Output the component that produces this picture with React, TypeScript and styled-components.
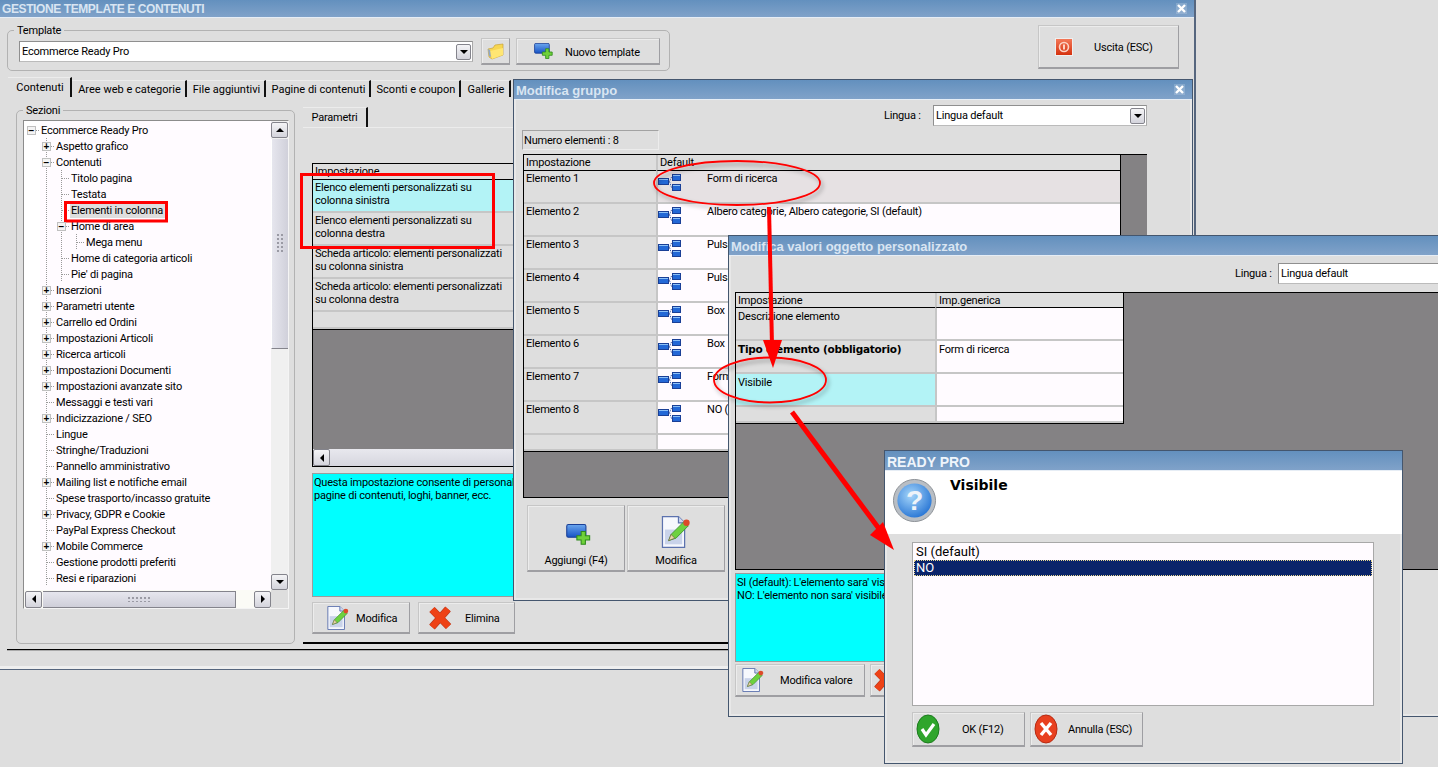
import React from "react";
import styled, { createGlobalStyle } from "styled-components";

const treeItems: { label: string; level: number; exp?: "+" | "-"; hl?: boolean }[] = [
  { label: "Ecommerce Ready Pro", level: 0, exp: "-" },
  { label: "Aspetto grafico", level: 1, exp: "+" },
  { label: "Contenuti", level: 1, exp: "-" },
  { label: "Titolo pagina", level: 2 },
  { label: "Testata", level: 2 },
  { label: "Elementi in colonna", level: 2, hl: true },
  { label: "Home di area", level: 2, exp: "-" },
  { label: "Mega menu", level: 3 },
  { label: "Home di categoria articoli", level: 2 },
  { label: "Pie' di pagina", level: 2 },
  { label: "Inserzioni", level: 1, exp: "+" },
  { label: "Parametri utente", level: 1, exp: "+" },
  { label: "Carrello ed Ordini", level: 1, exp: "+" },
  { label: "Impostazioni Articoli", level: 1, exp: "+" },
  { label: "Ricerca articoli", level: 1, exp: "+" },
  { label: "Impostazioni Documenti", level: 1, exp: "+" },
  { label: "Impostazioni avanzate sito", level: 1, exp: "+" },
  { label: "Messaggi e testi vari", level: 1 },
  { label: "Indicizzazione / SEO", level: 1, exp: "+" },
  { label: "Lingue", level: 1 },
  { label: "Stringhe/Traduzioni", level: 1 },
  { label: "Pannello amministrativo", level: 1 },
  { label: "Mailing list e notifiche email", level: 1, exp: "+" },
  { label: "Spese trasporto/incasso gratuite", level: 1 },
  { label: "Privacy, GDPR e Cookie", level: 1, exp: "+" },
  { label: "PayPal Express Checkout", level: 1 },
  { label: "Mobile Commerce", level: 1, exp: "+" },
  { label: "Gestione prodotti preferiti", level: 1 },
  { label: "Resi e riparazioni", level: 1 },
];

const tabs = [
  { label: "Contenuti", w: 64 },
  { label: "Aree web e categorie", w: 115 },
  { label: "File aggiuntivi", w: 79 },
  { label: "Pagine di contenuti", w: 105 },
  { label: "Sconti e coupon", w: 90 },
  { label: "Gallerie", w: 50 },
];

const params = [
  "Elenco elementi personalizzati su colonna sinistra",
  "Elenco elementi personalizzati su colonna destra",
  "Scheda articolo: elementi personalizzati su colonna sinistra",
  "Scheda articolo: elementi personalizzati su colonna destra",
];

const groupRows = [
  "Form di ricerca",
  "Albero categorie, Albero categorie, SI (default)",
  "Pulsanti",
  "Pulsanti",
  "Box",
  "Box",
  "Form",
  "NO (default)",
];

const CloseIcon = () => (
  <svg width="9" height="9" viewBox="0 0 9 9">
    <path d="M1 1l7 7M8 1L1 8" stroke="#fff" strokeWidth="2.4" />
  </svg>
);

const FolderIcon = () => (
  <svg width="17" height="17" viewBox="0 0 17 17">
    <path d="M1 6l5-1 2-3 8-1v11l-11 4-3-2z" fill="#f7d651" stroke="#c9a437" strokeWidth=".7" />
    <path d="M3 8l13-3v7l-11 4z" fill="#ffe673" />
    <path d="M1 6l1 7 2 1-1-7z" fill="#8fa7c9" />
  </svg>
);

const AddIcon = ({ size = 22 }: { size?: number }) => (
  <svg width={size} height={size * 0.82} viewBox="0 0 24 20">
    <defs>
      <linearGradient id="addBlue" x1="0" y1="0" x2="0" y2="1">
        <stop offset="0" stopColor="#6aa6ee" />
        <stop offset="1" stopColor="#1652c4" />
      </linearGradient>
    </defs>
    <rect x=".5" y=".5" width="18" height="12" rx="1.5" fill="url(#addBlue)" stroke="#1a3f96" />
    <path d="M14 7h4v4h4v4h-4v4h-4v-4h-4v-4h4z" fill="#6fd13a" stroke="#2f8a1c" />
  </svg>
);

const EditIcon = ({ size = 24 }: { size?: number }) => (
  <svg width={size} height={size} viewBox="0 0 26 26">
    <path d="M2 .5h13l5 5v20H2z" fill="#f6f8fd" stroke="#5c72ae" />
    <path d="M15 .5v5h5" fill="#cfd9ee" stroke="#5c72ae" />
    <rect x="4" y="11" width="14" height="12" fill="#c9d3ea" />
    <path d="M7 20l2-5 10-10 4 3-10 10z" fill="#6dd13f" stroke="#3a8f2a" strokeWidth=".7" />
    <path d="M7 20l2-5 3 3z" fill="#e8d6a8" stroke="#6b5a3a" strokeWidth=".5" />
    <circle cx="21.5" cy="5.5" r="2.6" fill="#dc4a2a" />
  </svg>
);

const CrossIcon = () => (
  <svg width="24" height="24" viewBox="0 0 24 24">
    <path d="M4 3.500L20.500 20.500M20 3L4 21" stroke="#b93a1e" strokeWidth="7.500" />
    <path d="M4 3.500L20.500 20.500M20 3L4 21" stroke="#ee4216" strokeWidth="6.300" />
  </svg>
);

const TreeIcon = () => (
  <svg width="23" height="17" viewBox="0 0 23 17">
    <path d="M10 7.500h1.500l2-4.500h1M11.500 7.500l2 6h1" fill="none" stroke="#3c5fa8" strokeDasharray="1.500 1" />
    <rect x=".5" y="4.500" width="10" height="6" fill="#2368d6" stroke="#1a3f96" />
    <rect x="14.500" y=".5" width="8" height="6" fill="#2368d6" stroke="#1a3f96" />
    <rect x="14.500" y="10.500" width="8" height="6" fill="#2368d6" stroke="#1a3f96" />
    <path d="M1 5.500h9M15 1.500h7M15 11.500h7" stroke="#8cc0f7" />
  </svg>
);

const PowerIcon = () => (
  <svg width="18" height="18" viewBox="0 0 18 18">
    <defs>
      <linearGradient id="pwr" x1="0" y1="0" x2="0" y2="1">
        <stop offset="0" stopColor="#f47a5a" />
        <stop offset="1" stopColor="#d42f0c" />
      </linearGradient>
    </defs>
    <rect x=".5" y=".5" width="17" height="17" fill="url(#pwr)" stroke="#efefef" />
    <circle cx="9" cy="9" r="4.500" fill="none" stroke="#fbd3c5" strokeWidth="1.600" />
    <rect x="8" y="6.500" width="2" height="5" fill="#fbd3c5" />
  </svg>
);

const QuestionIcon = () => (
  <svg width="45" height="45" viewBox="0 0 46 46">
    <defs>
      <radialGradient id="qBlue" cx=".4" cy=".35" r=".7">
        <stop offset="0" stopColor="#a6d6fa" />
        <stop offset="1" stopColor="#2674d4" />
      </radialGradient>
    </defs>
    <circle cx="23" cy="23" r="21.500" fill="#b9bec4" stroke="#8b9096" />
    <circle cx="23" cy="23" r="17.500" fill="url(#qBlue)" />
    <text x="23" y="33" textAnchor="middle" fontFamily="Liberation Sans" fontWeight="700" fontSize="29" fill="#eef3f9">?</text>
  </svg>
);

const RoundIcon = ({ ok }: { ok?: boolean }) => (
  <svg width="24" height="30" viewBox="0 0 24 30">
    <ellipse cx="12" cy="15" rx="11" ry="14" fill={ok ? "#2fa52c" : "#e8401f"} stroke={ok ? "#1d7a1e" : "#b52a12"} />
    {ok ? (
      <path d="M6 15l4 6 8-11" fill="none" stroke="#fff" strokeWidth="3.200" />
    ) : (
      <path d="M7 9l10 12M17 9L7 21" fill="none" stroke="#fff" strokeWidth="3.400" />
    )}
  </svg>
);

const Combo = ({ value, width }: { value: string; width: number }) => (
  <ComboBox $width={width}>
    <span>{value}</span>
    <ScrollBtn $dir="down" $w={15} $h={16} />
  </ComboBox>
);

const Table = ({
  cols,
  width,
  head,
  headH,
  children,
}: {
  cols: string;
  width: number;
  head: string[];
  headH: number;
  children: React.ReactNode;
}) => (
  <GridTable $cols={cols} $width={width}>
    {head.map((h, i) => (
      <HeadCell key={h} $h={headH} $second={i > 0}>{h}</HeadCell>
    ))}
    {children}
  </GridTable>
);

const App = () => {
  return (
    <Desktop>
      <GlobalStyle />

      {/* finestra principale */}
      <Window $x={0} $y={0} $w={1196} $h={671}>
        <TitleBar $h={18}>
          <TitleText $caps>GESTIONE TEMPLATE E CONTENUTI</TitleText>
          <CloseBtn $right={7}><CloseIcon /></CloseBtn>
        </TitleBar>
        <TopRow>
          <TemplateGroup>
            <Legend>Template</Legend>
            <TemplateInner>
              <Combo value="Ecommerce Ready Pro" width={454} />
              <FlatBtn $w={29} $h={27} $ml={8}><FolderIcon /></FlatBtn>
              <FlatBtn $w={144} $h={27} $ml={6} $pl={17}>
                <AddIcon size={20} />
                <BtnLabel $ml={11} $low>Nuovo template</BtnLabel>
              </FlatBtn>
            </TemplateInner>
          </TemplateGroup>
          <FlatBtn $w={141} $h={44} $mt={7} $ml={368} $pl={16}>
            <PowerIcon />
            <BtnLabel $ml={21} $low>Uscita (ESC)</BtnLabel>
          </FlatBtn>
        </TopRow>
        <Tabs>
          {tabs.map((t, i) => (
            <Tab key={t.label} $w={t.w} $active={i === 0}>{t.label}</Tab>
          ))}
        </Tabs>
        <MainPanel>
          <SectionGroup>
            <Legend>Sezioni</Legend>
            <TreeFrame>
              <TreeBody>
                {treeItems.map((it) => (
                  <TreeRow key={it.label}>
                    {it.level === 0 ? (
                      <TreeCell $branch><Expander>−</Expander></TreeCell>
                    ) : (
                      <TreeCell />
                    )}
                    {it.level >= 2 && <TreeCell $line />}
                    {it.level >= 3 && <TreeCell $line />}
                    {it.level > 0 && (
                      <TreeCell $line $branch>
                        {it.exp && <Expander>{it.exp === "+" ? "+" : "−"}</Expander>}
                      </TreeCell>
                    )}
                    <TreeLabel $hl={it.hl}>{it.label}</TreeLabel>
                  </TreeRow>
                ))}
              </TreeBody>
              <VScroll>
                <ScrollBtn $dir="up" $w={17} $h={16} />
                <VThumb $h={210}><Grip /></VThumb>
                <ScrollBtn $dir="down" $w={17} $h={16} />
              </VScroll>
              <HScroll>
                <ScrollBtn $dir="left" $w={17} $h={17} />
                <HThumb $w={193}><Grip $wide /></HThumb>
                <ScrollBtn $dir="right" $w={17} $h={17} />
              </HScroll>
              <Corner />
            </TreeFrame>
          </SectionGroup>

          <SubPanel>
            <SubTab>Parametri</SubTab>
            <SubBody>
              <GridArea $h={304} $w={400} $mt={35}>
                <Table cols="1fr" width={201} head={["Impostazione"]} headH={16}>
                  {params.map((p, i) => (
                    <Cell key={p} $h={33} $bg={i === 0 ? "#b3f3f6" : "#dedede"}>{p}</Cell>
                  ))}
                  <Cell $h={17} $bg="#dedede" />
                </Table>
                <GreyFill />
                <HScrollPlain>
                  <ScrollBtn $dir="left" $w={17} $h={17} />
                </HScrollPlain>
              </GridArea>
              <HelpBox $h={124} $w={400} $mt={6}>
                Questa impostazione consente di personalizzare gli elementi delle
                <br />
                pagine di contenuti, loghi, banner, ecc.
              </HelpBox>
              <BtnRow $mt={5} $gap={8}>
                <FlatBtn $w={98} $h={32}>
                  <EditIcon />
                  <BtnLabel $ml={6} $low>Modifica</BtnLabel>
                </FlatBtn>
                <FlatBtn $w={97} $h={32} $pl={9}>
                  <CrossIcon />
                  <BtnLabel $ml={13} $low>Elimina</BtnLabel>
                </FlatBtn>
              </BtnRow>
            </SubBody>
          </SubPanel>
        </MainPanel>
        <WindowFoot />
      </Window>

      {/* modifica gruppo */}
      <Window $x={513} $y={79} $w={680} $h={522} $frame>
        <TitleBar $h={20}>
          <TitleText>Modifica gruppo</TitleText>
          <CloseBtn $right={7}><CloseIcon /></CloseBtn>
        </TitleBar>
        <LangRow $ml={370} $mt={5}>
          <LangLabel $w={49}>Lingua :</LangLabel>
          <Combo value="Lingua default" width={214} />
        </LangRow>
        <CountBox>Numero elementi : 8</CountBox>
        <GridArea $h={344} $w={624} $mt={4} $ml={9}>
          <Table cols="132px 1fr" width={597} head={["Impostazione", "Default"]} headH={16}>
            {groupRows.map((r, i) => (
              <React.Fragment key={i}>
                <Cell $h={33}>Elemento {i + 1}</Cell>
                <ValueCell $h={33} $current={i === 0} $icon>
                  <TreeIcon />
                  <ValueText>{r}</ValueText>
                </ValueCell>
              </React.Fragment>
            ))}
            <Cell $h={16} />
            <ValueCell $h={16} />
          </Table>
          <GreyFill />
        </GridArea>
        <BtnRow $mt={7} $ml={13} $gap={2}>
          <TallBtn>
            <AddShift><AddIcon size={26} /></AddShift>
            <span>Aggiungi (F4)</span>
          </TallBtn>
          <TallBtn>
            <EditIcon size={32} />
            <span>Modifica</span>
          </TallBtn>
        </BtnRow>
      </Window>

      {/* modifica valori */}
      <Window $x={728} $y={235} $w={730} $h={482} $frame>
        <TitleBar $h={20}>
          <TitleText>Modifica valori oggetto personalizzato</TitleText>
        </TitleBar>
        <LangRow $ml={506} $mt={7}>
          <LangLabel $w={43}>Lingua :</LangLabel>
          <Combo value="Lingua default" width={300} />
        </LangRow>
        <GridArea $h={278} $w={720} $mt={8} $ml={6}>
          <Table cols="199px 1fr" width={388} head={["Impostazione", "Imp.generica"]} headH={15}>
            <Cell $h={33} $pt={2}>Descrizione elemento</Cell>
            <ValueCell $h={33} />
            <Cell $h={33} $pt={2}><BoldText>Tipo elemento (obbligatorio)</BoldText></Cell>
            <ValueCell $h={33} $pt={2}>Form di ricerca</ValueCell>
            <Cell $h={33} $bg="#b3f3f6" $pt={2}>Visibile</Cell>
            <ValueCell $h={33} />
            <Cell $h={16} />
            <ValueCell $h={16} />
          </Table>
          <GreyFill />
        </GridArea>
        <HelpBox $h={89} $w={400} $mt={3} $ml={6}>
          SI (default): L'elemento sara' visibile
          <br />
          NO: L'elemento non sara' visibile
        </HelpBox>
        <BtnRow $mt={2} $ml={6} $gap={5}>
          <FlatBtn $w={130} $h={33} $pl={5}>
            <EditIcon />
            <BtnLabel $ml={15}>Modifica valore</BtnLabel>
          </FlatBtn>
          <FlatBtn $w={130} $h={33} $pl={2}>
            <CrossIcon />
          </FlatBtn>
        </BtnRow>
      </Window>

      {/* dialogo */}
      <Window $x={884} $y={450} $w={519} $h={314} $frame>
        <TitleBar $h={20}>
          <TitleText $small>READY PRO</TitleText>
        </TitleBar>
        <DialogHead>
          <QuestionIcon />
          <DialogTitle>Visibile</DialogTitle>
        </DialogHead>
        <ChoiceList>
          <Choice>SI (default)</Choice>
          <Choice $selected>NO</Choice>
        </ChoiceList>
        <BtnRow $mt={6} $ml={27} $gap={5}>
          <FlatBtn $w={113} $h={35} $pl={3}>
            <RoundIcon ok />
            <BtnLabel $ml={22}>OK (F12)</BtnLabel>
          </FlatBtn>
          <FlatBtn $w={113} $h={35} $pl={3}>
            <RoundIcon />
            <BtnLabel $ml={10}>Annulla (ESC)</BtnLabel>
          </FlatBtn>
        </BtnRow>
      </Window>

      {/* annotazioni rosse */}
      <Marks width="1438" height="767" viewBox="0 0 1438 767">
        <defs>
          <filter id="soft" x="-10%" y="-20%" width="120%" height="150%">
            <feDropShadow dx="2" dy="3" stdDeviation="2" floodColor="#000" floodOpacity=".35" />
          </filter>
        </defs>
        <rect x="65.500" y="202.500" width="101" height="18.500" fill="none" stroke="#f00" strokeWidth="3" />
        <rect x="301.500" y="174.500" width="192" height="73" fill="none" stroke="#f00" strokeWidth="3" />
        <ellipse cx="737" cy="183" rx="83" ry="22" fill="none" stroke="#f00" strokeWidth="1.800" filter="url(#soft)" />
        <ellipse cx="770" cy="380" rx="56" ry="22.500" fill="none" stroke="#f00" strokeWidth="1.800" filter="url(#soft)" />
        <path d="M769 207L772 345" stroke="#f00" strokeWidth="4" />
        <path d="M763 340L782 340L773 368z" fill="#f00" />
        <path d="M792 412L880 530" stroke="#f00" strokeWidth="5" />
        <path d="M870 535L883 522L894 550z" fill="#f00" />
      </Marks>
    </Desktop>
  );
};

const GlobalStyle = createGlobalStyle`
  html, body {
    margin: 0;
    padding: 0;
    overflow: hidden;
    background: #dedede;
  }
  * { box-sizing: border-box; }
  body {
    font-family: Roboto, "Liberation Sans", sans-serif;
    font-size: 11px;
    line-height: 13px;
    letter-spacing: -0.2px;
    color: #000;
  }
`;

const Desktop = styled.div`
  position: relative;
  width: 1438px;
  height: 767px;
  overflow: hidden;
  background: #dedede;
`;

const Window = styled.div<{ $x: number; $y: number; $w: number; $h: number; $frame?: boolean }>`
  position: absolute;
  left: ${(p) => p.$x}px;
  top: ${(p) => p.$y}px;
  width: ${(p) => p.$w}px;
  height: ${(p) => p.$h}px;
  background: #dedede;
  display: flex;
  flex-direction: column;
  overflow: hidden;
  border-right: 2px solid #56667e;
  ${(p) => p.$frame && "border: 1px solid #44566e; box-shadow: inset 0 0 0 2px #e8e8e8;"}
`;

const TitleBar = styled.div<{ $h: number }>`
  flex: none;
  height: ${(p) => p.$h}px;
  display: flex;
  align-items: center;
  justify-content: space-between;
  padding-left: 2px;
  background: linear-gradient(#6390be, #80a2c9);
  border-bottom: 1px solid #e6edf5;
`;

const TitleText = styled.span<{ $caps?: boolean; $small?: boolean }>`
  font-family: "Liberation Sans", Arial, sans-serif;
  color: #d9e5f2;
  font-weight: 700;
  font-size: ${(p) => (p.$caps ? 12 : p.$small ? 14 : 13)}px;
  margin-top: ${(p) => (p.$caps ? 1 : p.$small ? 3 : 2)}px;
  letter-spacing: ${(p) => (p.$caps ? -0.4 : 0)}px;
  ${(p) => p.$small && "color: #f0f5fb;"}
`;

const CloseBtn = styled.span<{ $right: number }>`
  display: flex;
  align-items: center;
  justify-content: center;
  width: 11px;
  height: 11px;
  margin-right: ${(p) => p.$right}px;
  background: rgba(255, 255, 255, 0.18);
`;

const TopRow = styled.div`
  flex: none;
  height: 60px;
  display: flex;
  align-items: flex-start;
  padding-left: 7px;
`;

const Legend = styled.legend`
  margin-left: 6px;
  padding: 0 3px;
  line-height: 13px;
`;

const TemplateGroup = styled.fieldset`
  width: 663px;
  height: 47px;
  margin: 6px 0 0;
  padding: 0;
  border: 1px solid #b2b2b2;
  border-radius: 5px;
`;

const TemplateInner = styled.div`
  display: flex;
  align-items: center;
  margin: 1px 0 0 11px;
`;

const ComboBox = styled.div<{ $width: number }>`
  flex: none;
  width: ${(p) => p.$width}px;
  height: 21px;
  display: flex;
  align-items: center;
  justify-content: space-between;
  padding: 0 1px 0 2px;
  background: #fff;
  border: 1px solid #8f8f8f;
  border-right-color: #aaa;
  border-bottom-color: #bbb;
`;

const ScrollBtn = styled.span<{ $dir: "up" | "down" | "left" | "right"; $w: number; $h: number }>`
  flex: none;
  display: flex;
  align-items: center;
  justify-content: center;
  width: ${(p) => p.$w}px;
  height: ${(p) => p.$h}px;
  background: linear-gradient(#f4f4f6, #d4d4dc);
  border: 1px solid #84848c;
  border-radius: 2px;
  &::after {
    content: "";
    width: 0;
    height: 0;
    ${(p) =>
      p.$dir === "up"
        ? "border-left: 4px solid transparent; border-right: 4px solid transparent; border-bottom: 4px solid #000;"
        : p.$dir === "down"
        ? "border-left: 4px solid transparent; border-right: 4px solid transparent; border-top: 4px solid #000;"
        : p.$dir === "left"
        ? "border-top: 4px solid transparent; border-bottom: 4px solid transparent; border-right: 4px solid #000;"
        : "border-top: 4px solid transparent; border-bottom: 4px solid transparent; border-left: 4px solid #000;"}
  }
`;

const FlatBtn = styled.div<{ $w: number; $h: number; $ml?: number; $mt?: number; $pl?: number }>`
  flex: none;
  width: ${(p) => p.$w}px;
  height: ${(p) => p.$h}px;
  margin-left: ${(p) => p.$ml ?? 0}px;
  margin-top: ${(p) => p.$mt ?? 0}px;
  display: flex;
  align-items: center;
  justify-content: ${(p) => (p.$w < 40 ? "center" : "flex-start")};
  padding-left: ${(p) => (p.$w < 40 ? 0 : p.$pl ?? 13)}px;
  background: #dedede;
  border: 1px solid #c6c6c6;
  border-right: 1px solid #9e9ea2;
  border-bottom: 2px solid #9e9ea2;
  box-shadow: inset 1px 1px 0 #ececec;
`;

const BtnLabel = styled.span<{ $ml: number; $low?: boolean }>`
  margin-left: ${(p) => p.$ml}px;
  ${(p) => p.$low && "margin-top: 2px;"}
  white-space: nowrap;
`;

const Tabs = styled.div`
  flex: none;
  height: 19px;
  display: flex;
  align-items: flex-end;
  margin-left: 8px;
`;

const Tab = styled.div<{ $w: number; $active?: boolean }>`
  flex: none;
  width: ${(p) => p.$w}px;
  height: ${(p) => (p.$active ? 20 : 17)}px;
  ${(p) => p.$active && "margin-top: -1px;"}
  display: flex;
  align-items: center;
  justify-content: center;
  padding-left: 2px;
  letter-spacing: 0;
  white-space: nowrap;
  border-right: 2px solid #111;
  border-top: 1px solid #ececec;
`;

const MainPanel = styled.div`
  flex: none;
  height: 553px;
  margin-left: 7px;
  display: flex;
  padding: 7px 0 0 9px;
  border-bottom: 1px solid #000;
  box-shadow: 0 1px 0 #aaa;
`;

const SectionGroup = styled.fieldset`
  flex: none;
  width: 279px;
  height: 540px;
  margin: 0;
  padding: 0;
  border: 1px solid #b2b2b2;
  border-radius: 5px;
`;

const TreeFrame = styled.div`
  width: 266px;
  height: 489px;
  margin: 3px 0 0 6px;
  display: grid;
  grid-template-columns: 1fr 17px;
  grid-template-rows: 1fr 18px;
  border: 1px solid #8c8c8c;
  border-right-color: #f4f4f4;
  border-bottom-color: #f4f4f4;
  background: #fffbff;
`;

const TreeBody = styled.div`
  overflow: hidden;
  padding-top: 1px;
  background: linear-gradient(90deg, #fff 16px, #fffbff 16px);
`;

const TreeRow = styled.div`
  display: flex;
  align-items: center;
  height: 16px;
  white-space: nowrap;
`;

const TreeCell = styled.span<{ $line?: boolean; $branch?: boolean }>`
  flex: none;
  position: relative;
  width: 15px;
  height: 16px;
  display: flex;
  align-items: center;
  justify-content: center;
  ${(p) =>
    p.$line &&
    "background-image: linear-gradient(#9a9a9a 50%, transparent 50%); background-size: 1px 2px; background-repeat: repeat-y; background-position: 7px 0;"}
  ${(p) =>
    p.$branch &&
    `&::after {
      content: "";
      position: absolute;
      left: 8px;
      top: 8px;
      width: 8px;
      height: 1px;
      background-image: linear-gradient(90deg, #9a9a9a 50%, transparent 50%);
      background-size: 2px 1px;
    }`}
`;

const Expander = styled.span`
  position: relative;
  z-index: 1;
  width: 9px;
  height: 9px;
  display: flex;
  align-items: center;
  justify-content: center;
  background: #f4f4f4;
  border: 1px solid #c0c0c0;
  font-family: "Liberation Sans", sans-serif;
  font-size: 10px;
  line-height: 7px;
  font-weight: 700;
  letter-spacing: 0;
  color: #000;
`;

const TreeLabel = styled.span<{ $hl?: boolean }>`
  margin-left: 1px;
  padding: 0 2px 0 1px;
  height: 15px;
  line-height: 15px;
  ${(p) => p.$hl && "background: #dedede;"}
`;

const VScroll = styled.div`
  display: flex;
  flex-direction: column;
  justify-content: space-between;
  padding-top: 1px;
  background: #f0f0f0;
  & > :nth-child(2) { margin-bottom: auto; margin-top: 1px; }
`;

const VThumb = styled.div<{ $h: number }>`
  height: ${(p) => p.$h}px;
  display: flex;
  align-items: center;
  justify-content: center;
  background: linear-gradient(90deg, #e6e6ee, #d0d0da);
  border-bottom: 1px solid #84848c;
  border-left: 1px solid #fff;
`;

const HScroll = styled.div`
  display: flex;
  align-items: center;
  padding-left: 1px;
  background: #fbfbf6;
  justify-content: space-between;
  & > :nth-child(2) { margin-right: auto; margin-left: 1px; }
`;

const HThumb = styled.div<{ $w: number }>`
  width: ${(p) => p.$w}px;
  height: 17px;
  display: flex;
  align-items: center;
  justify-content: center;
  background: linear-gradient(#e6e6ee, #cfcfd9);
  border: 1px solid #84848c;
  border-left: none;
`;

const Grip = styled.span<{ $wide?: boolean }>`
  width: ${(p) => (p.$wide ? 24 : 9)}px;
  height: ${(p) => (p.$wide ? 6 : 21)}px;
  background-image: radial-gradient(circle, #9a9aa4 0.8px, transparent 1px);
  background-size: 4px 4px;
`;

const Corner = styled.div`
  background: #dedede;
`;

const SubPanel = styled.div`
  flex: none;
  width: 430px;
  height: 537px;
  margin: 3px 0 0 8px;
  display: flex;
  flex-direction: column;
  border-bottom: 2px solid #000;
`;

const SubTab = styled.div`
  flex: none;
  width: 65px;
  height: 20px;
  display: flex;
  align-items: center;
  justify-content: center;
  border-right: 2px solid #111;
  border-top: 1px solid #ececec;
`;

const SubBody = styled.div`
  flex: 1;
  padding-left: 9px;
  border-top: 1px solid #ececec;
`;

const GridArea = styled.div<{ $h: number; $w: number; $mt: number; $ml?: number }>`
  flex: none;
  width: ${(p) => p.$w}px;
  height: ${(p) => p.$h}px;
  margin-top: ${(p) => p.$mt}px;
  margin-left: ${(p) => p.$ml ?? 0}px;
  display: flex;
  flex-direction: column;
  background: #848284;
  border-left: 1px solid #000;
  border-top: 1px solid #000;
  border-bottom: 1px solid #000;
`;

const GridTable = styled.div<{ $cols: string; $width: number }>`
  flex: none;
  display: grid;
  grid-template-columns: ${(p) => p.$cols};
  width: ${(p) => p.$width}px;
  border-right: 1px solid #000;
  border-bottom: 1px solid #000;
`;

const HeadCell = styled.div<{ $h: number; $second?: boolean }>`
  height: ${(p) => p.$h}px;
  padding: 1px 2px;
  background: #dedede;
  border-bottom: 1px solid #000;
  ${(p) => p.$second && "border-left: 2px solid #c6c6c6;"}
`;

const Cell = styled.div<{ $h: number; $bg?: string; $pt?: number }>`
  height: ${(p) => p.$h}px;
  padding: ${(p) => p.$pt ?? 1}px 2px 0;
  background: ${(p) => p.$bg ?? "#dedede"};
  border-bottom: 2px solid #c6c6c6;
`;

const BoldText = styled.b`
  font-family: "DejaVu Sans", sans-serif;
  font-size: 10.5px;
  letter-spacing: -0.25px;
`;

const ValueCell = styled.div<{ $h: number; $current?: boolean; $icon?: boolean; $pt?: number }>`
  height: ${(p) => p.$h}px;
  display: flex;
  align-items: flex-start;
  padding: ${(p) => p.$pt ?? 1}px ${(p) => (p.$icon ? 0 : 2)}px 0;
  white-space: nowrap;
  overflow: hidden;
  background: ${(p) => (p.$current ? "#e6e1e3" : "#fffbff")};
  border-bottom: 2px solid #c6c6c6;
  border-left: 2px solid #c6c6c6;
  svg { flex: none; margin-top: 2px; }
`;

const ValueText = styled.span`
  margin-left: 26px;
`;

const GreyFill = styled.div`
  flex: 1;
  background: #848284;
`;

const HScrollPlain = styled.div`
  flex: none;
  height: 17px;
  display: flex;
  background: linear-gradient(#e8e8ee, #d6d6de);
`;

const HelpBox = styled.div<{ $h: number; $w: number; $mt: number; $ml?: number }>`
  flex: none;
  width: ${(p) => p.$w}px;
  height: ${(p) => p.$h}px;
  margin-top: ${(p) => p.$mt}px;
  margin-left: ${(p) => p.$ml ?? 0}px;
  padding: 2px 1px;
  white-space: nowrap;
  overflow: hidden;
  background: #00ffff;
  border: 1px solid #9c9c9c;
`;

const BtnRow = styled.div<{ $mt: number; $ml?: number; $gap: number }>`
  flex: none;
  display: flex;
  gap: ${(p) => p.$gap}px;
  margin-top: ${(p) => p.$mt}px;
  margin-left: ${(p) => p.$ml ?? 0}px;
`;

const LangRow = styled.div<{ $ml: number; $mt: number }>`
  flex: none;
  display: flex;
  align-items: center;
  margin-left: ${(p) => p.$ml}px;
  margin-top: ${(p) => p.$mt}px;
`;

const LangLabel = styled.span<{ $w: number }>`
  flex: none;
  width: ${(p) => p.$w}px;
`;

const CountBox = styled.div`
  flex: none;
  width: 137px;
  height: 20px;
  margin: 4px 0 0 8px;
  padding: 3px 1px;
  border: 1px solid #ececec;
  border-top-color: #a2a2a2;
  border-left-color: #a2a2a2;
`;

const TallBtn = styled.div`
  flex: none;
  width: 98px;
  height: 67px;
  display: flex;
  flex-direction: column;
  align-items: center;
  justify-content: flex-end;
  gap: 6px;
  padding-bottom: 3px;
  border: 1px solid #c6c6c6;
  border-right: 1px solid #9e9ea2;
  border-bottom: 2px solid #9e9ea2;
  box-shadow: inset 1px 1px 0 #ececec;
`;

const AddShift = styled.span`
  display: flex;
  margin: 0 0 3px 6px;
`;

const DialogHead = styled.div`
  flex: none;
  height: 63px;
  display: flex;
  align-items: flex-start;
  padding: 7px 0 0 7px;
  background: #fff;
`;

const DialogTitle = styled.span`
  margin: -1px 0 0 13px;
  font-family: "DejaVu Sans", sans-serif;
  font-size: 14px;
  line-height: 17px;
  font-weight: 700;
  letter-spacing: 0;
`;

const ChoiceList = styled.div`
  flex: none;
  width: 462px;
  height: 164px;
  margin: 8px 0 0 27px;
  padding: 1px;
  background: #fffbff;
  border: 1px solid #a8a8a8;
`;

const Choice = styled.div<{ $selected?: boolean }>`
  height: 16px;
  padding-left: 2px;
  font-size: 13px;
  line-height: 16px;
  letter-spacing: 0;
  ${(p) => p.$selected && "background: #0a246a; color: #fff; outline: 1px dotted #e8d890; outline-offset: -1px;"}
`;

const Marks = styled.svg`
  position: absolute;
  left: 0;
  top: 0;
  pointer-events: none;
`;

const WindowFoot = styled.div`
  flex: none;
  margin-top: 16px;
  height: 4px;
  background: #efefef;
  border-bottom: 1px solid #56667e;
`;

export default App;
